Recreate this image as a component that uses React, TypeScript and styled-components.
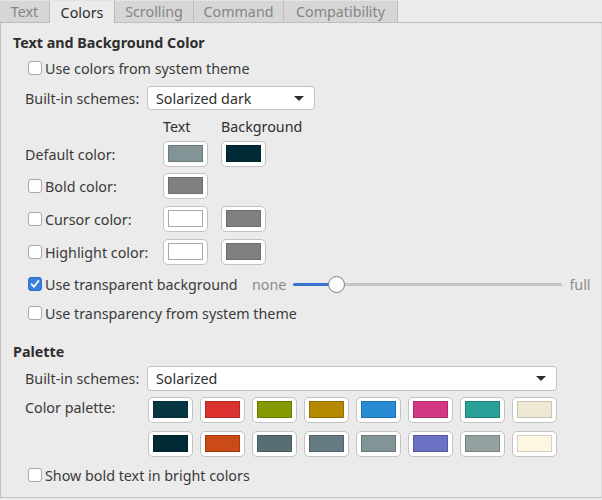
import React from "react";
import styled, { createGlobalStyle } from "styled-components";

const Global = createGlobalStyle`
  html, body { margin: 0; padding: 0; background: #ebebeb; }
  body { font-family: "Noto Sans", "Open Sans", sans-serif; font-size: 14.3px; color: #3a3a3a; }
  * { box-sizing: border-box; }
`;

const Window = styled.div`
  width: 602px;
  height: 500px;
  background: #ebebeb;
  display: flex;
  flex-direction: column;
`;

const TabBar = styled.div`
  display: flex;
  height: 23px;
  border-bottom: 1px solid #bdbdbd;
`;

const Tab = styled.div<{ $active?: boolean; $w: number }>`
  width: ${(p) => p.$w}px;
  height: ${(p) => (p.$active ? 23 : 22)}px;
  display: flex;
  align-items: center;
  justify-content: center;
  background: ${(p) => (p.$active ? "#ebebeb" : "#d6d6d6")};
  color: ${(p) => (p.$active ? "#2e2e2e" : "#858585")};
  border-right: 1px solid #bdbdbd;
  border-top: 1px solid #e4e4e4;
  font-size: 14.3px;
  position: relative;
  z-index: 1;
`;

const Panel = styled.div`
  height: 475px;
  border-left: 1px solid #c4c4c4;
  border-right: 1px solid #dcdcdc;
  border-bottom: 1px solid #c4c4c4;
  padding-left: 12px;
  display: flex;
  flex-direction: column;
`;

const Heading = styled.div<{ $mt: number }>`
  margin-top: ${(p) => p.$mt}px;
  height: 20px;
  line-height: 20px;
  font-weight: 700;
  color: #2e2e2e;
`;

const Row = styled.div<{ $mt: number; $h?: number; $indent?: number }>`
  margin-top: ${(p) => p.$mt}px;
  height: ${(p) => p.$h ?? 20}px;
  display: flex;
  align-items: center;
  padding-left: ${(p) => p.$indent ?? 12}px;
`;

const CheckLabel = styled.label<{ $w?: number }>`
  display: flex;
  align-items: center;
  gap: 3px;
  width: ${(p) => (p.$w ? `${p.$w}px` : "auto")};
  flex: none;
  white-space: nowrap;
`;

const Box = styled.span<{ $checked?: boolean }>`
  width: 14px;
  height: 14px;
  border-radius: 3px;
  border: 1px solid ${(p) => (p.$checked ? "#2f6fcf" : "#a8a8a8")};
  background: ${(p) => (p.$checked ? "#3a7ddb" : "#ffffff")};
  display: flex;
  align-items: center;
  justify-content: center;
  flex: none;
`;

const Label = styled.span<{ $w: number }>`
  width: ${(p) => p.$w}px;
  flex: none;
  white-space: nowrap;
`;

const Combo = styled.div<{ $w: number; $h: number }>`
  width: ${(p) => p.$w}px;
  height: ${(p) => p.$h}px;
  background: #ffffff;
  border: 1px solid #c2c2c2;
  border-radius: 4px;
  display: flex;
  align-items: center;
  justify-content: space-between;
  padding: 0 10px 0 8px;
  color: #2e2e2e;
`;

const Arrow = styled.span`
  width: 0;
  height: 0;
  border-left: 5px solid transparent;
  border-right: 5px solid transparent;
  border-top: 5px solid #2e2e2e;
`;

const ColHead = styled.span<{ $w: number }>`
  width: ${(p) => p.$w}px;
  flex: none;
  color: #2e2e2e;
`;

const SwatchButton = styled.div`
  width: 45px;
  height: 26px;
  border: 1px solid #c2c2c2;
  border-radius: 5px;
  background: #ffffff;
  padding: 3px 4px 4px 4px;
  flex: none;
`;

const SwatchFill = styled.div<{ $c: string; $b: string }>`
  width: 100%;
  height: 100%;
  background: ${(p) => p.$c};
  border: 1px solid ${(p) => p.$b};
`;

const Swatches = styled.div`
  display: flex;
  gap: 13px;
`;

const SliderGroup = styled.div`
  display: flex;
  align-items: center;
  color: #8c8c8c;
`;

const Track = styled.div`
  position: relative;
  width: 269px;
  height: 3px;
  margin: 0 7px 0 7px;
  background: #c4c4c4;
  border-radius: 2px;
`;

const TrackFill = styled.div`
  height: 100%;
  background: #3a72d0;
  border-radius: 2px;
`;

const Knob = styled.div`
  position: absolute;
  top: -7px;
  width: 17px;
  height: 17px;
  margin-left: -8px;
  border-radius: 50%;
  background: #fbfbfb;
  border: 1px solid #7e7e7e;
`;

const PaletteGrid = styled.div`
  display: grid;
  grid-template-columns: repeat(8, 45px);
  column-gap: 7px;
  row-gap: 8px;
`;

const PaletteRow = styled.div`
  margin-top: 6px;
  display: flex;
  align-items: flex-start;
  padding-left: 12px;
`;

const PaletteLabel = styled.span`
  width: 123px;
  flex: none;
  margin-top: 1px;
`;

const Check = ({ checked }: { checked?: boolean }) => (
  <Box $checked={checked}>
    {checked && (
      <svg width="10" height="10" viewBox="0 0 10 10">
        <path d="M1.5 5.2 L4 7.8 L8.6 1.8" fill="none" stroke="#fff" strokeWidth="1.7" strokeLinecap="round" strokeLinejoin="round" />
      </svg>
    )}
  </Box>
);

const Swatch = ({ c, b }: { c: string; b: string }) => (
  <SwatchButton>
    <SwatchFill $c={c} $b={b} />
  </SwatchButton>
);

const palette: [string, string][] = [
  ["#073642", "#053039"],
  ["#dc322f", "#b22a27"],
  ["#859900", "#6b7b00"],
  ["#b58900", "#8f6d00"],
  ["#268bd2", "#1f71ab"],
  ["#d33682", "#ab2c69"],
  ["#2aa198", "#21837b"],
  ["#eee8d5", "#c9c4b4"],
  ["#002b36", "#00222b"],
  ["#cb4b16", "#a33c12"],
  ["#586e75", "#48595f"],
  ["#657b83", "#52646a"],
  ["#839496", "#6a787a"],
  ["#6c71c4", "#575b9f"],
  ["#93a1a1", "#778282"],
  ["#fdf6e3", "#d8d1c1"],
];

const tabs: [string, number][] = [
  ["Text", 50],
  ["Colors", 65],
  ["Scrolling", 79],
  ["Command", 90],
  ["Compatibility", 114],
];

export default function App() {
  const slider = 16;
  return (
    <Window>
      <Global />
      <TabBar>
        {tabs.map(([t, w]) => (
          <Tab key={t} $w={w} $active={t === "Colors"}>
            {t}
          </Tab>
        ))}
      </TabBar>
      <Panel>
        <Heading $mt={10}>Text and Background Color</Heading>
        <Row $mt={5} $indent={15}>
          <CheckLabel>
            <Check />
            Use colors from system theme
          </CheckLabel>
        </Row>
        <Row $mt={8} $h={24}>
          <Label $w={122}>Built-in schemes:</Label>
          <Combo $w={168} $h={24}>
            Solarized dark
            <Arrow />
          </Combo>
        </Row>
        <Row $mt={7} $h={18}>
          <Label $w={138}></Label>
          <ColHead $w={58}>Text</ColHead>
          <ColHead $w={90}>Background</ColHead>
        </Row>
        <Row $mt={6} $h={26}>
          <Label $w={138}>Default color:</Label>
          <Swatches>
            <Swatch c="#839496" b="#6c7a7c" />
            <Swatch c="#002b36" b="#00222b" />
          </Swatches>
        </Row>
        <Row $mt={6} $h={26} $indent={15}>
          <CheckLabel $w={135}>
            <Check />
            Bold color:
          </CheckLabel>
          <Swatches>
            <Swatch c="#808080" b="#6e6e6e" />
          </Swatches>
        </Row>
        <Row $mt={7} $h={26} $indent={15}>
          <CheckLabel $w={135}>
            <Check />
            Cursor color:
          </CheckLabel>
          <Swatches>
            <Swatch c="#ffffff" b="#a8a8a8" />
            <Swatch c="#808080" b="#6e6e6e" />
          </Swatches>
        </Row>
        <Row $mt={7} $h={26} $indent={15}>
          <CheckLabel $w={135}>
            <Check />
            Highlight color:
          </CheckLabel>
          <Swatches>
            <Swatch c="#ffffff" b="#a8a8a8" />
            <Swatch c="#808080" b="#6e6e6e" />
          </Swatches>
        </Row>
        <Row $mt={9} $indent={15}>
          <CheckLabel $w={224}>
            <Check checked />
            Use transparent background
          </CheckLabel>
          <SliderGroup>
            none
            <Track>
              <TrackFill style={{ width: `${slider}%` }} />
              <Knob style={{ left: `${slider}%` }} />
            </Track>
            full
          </SliderGroup>
        </Row>
        <Row $mt={9} $indent={15}>
          <CheckLabel>
            <Check />
            Use transparency from system theme
          </CheckLabel>
        </Row>
        <Heading $mt={19}>Palette</Heading>
        <Row $mt={4} $h={25}>
          <Label $w={122}>Built-in schemes:</Label>
          <Combo $w={410} $h={25}>
            Solarized
            <Arrow />
          </Combo>
        </Row>
        <PaletteRow>
          <PaletteLabel>Color palette:</PaletteLabel>
          <PaletteGrid>
            {palette.map(([c, b]) => (
              <Swatch key={c} c={c} b={b} />
            ))}
          </PaletteGrid>
        </PaletteRow>
        <Row $mt={8} $indent={15}>
          <CheckLabel>
            <Check />
            Show bold text in bright colors
          </CheckLabel>
        </Row>
      </Panel>
    </Window>
  );
}
